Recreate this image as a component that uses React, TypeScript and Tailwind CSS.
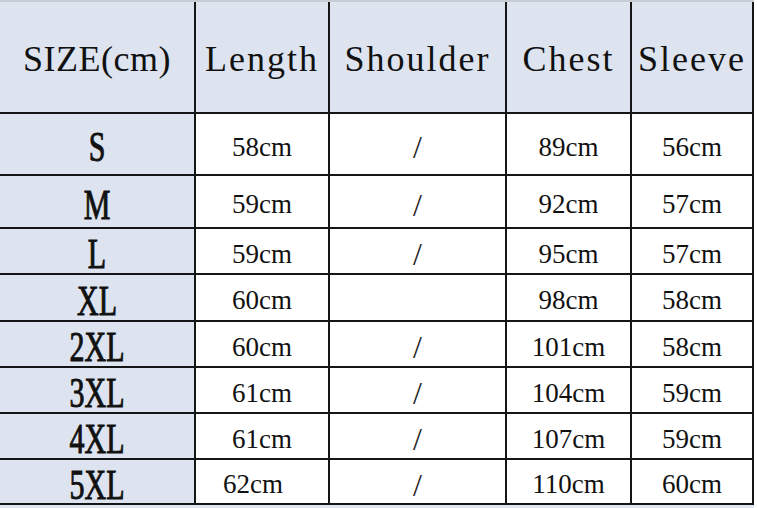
const headers = ["SIZE(cm)", "Length", "Shoulder", "Chest", "Sleeve"];

const rows = [
  { size: "S", length: "58cm", shoulder: "/", chest: "89cm", sleeve: "56cm", h: "h-[62px]" },
  { size: "M", length: "59cm", shoulder: "/", chest: "92cm", sleeve: "57cm", h: "h-[53px]" },
  { size: "L", length: "59cm", shoulder: "/", chest: "95cm", sleeve: "57cm", h: "h-[46px]" },
  { size: "XL", length: "60cm", shoulder: "", chest: "98cm", sleeve: "58cm", h: "h-[47px]" },
  { size: "2XL", length: "60cm", shoulder: "/", chest: "101cm", sleeve: "58cm", h: "h-[46px]" },
  { size: "3XL", length: "61cm", shoulder: "/", chest: "104cm", sleeve: "59cm", h: "h-[46px]" },
  { size: "4XL", length: "61cm", shoulder: "/", chest: "107cm", sleeve: "59cm", h: "h-[46px]" },
  { size: "5XL", length: "62cm", shoulder: "/", chest: "110cm", sleeve: "60cm", h: "h-[45px]" },
];

const widths = ["w-[196px]", "w-[134px]", "w-[177px]", "w-[125px]", "w-[122px]"];

const serif = { fontFamily: '"Liberation Serif", "Times New Roman", serif' };

export default function App() {
  return (
    <div className="w-[757px] h-[508px] bg-white overflow-hidden flex flex-col" style={serif}>
      <div className="h-[2px] w-[754px] bg-[#c6cbd4] shrink-0" />
      {/* header */}
      <div className="flex h-[112px] shrink-0">
        {headers.map((t, i) => (
          <div
            key={t}
            className={`${widths[i]} h-full bg-[#dde4ef] border-r-2 border-b-2 border-[#151515] flex items-center justify-center pt-[4px]`}
          >
            <span className={`text-[36px] leading-none text-[#111] inline-block ${i === 0 ? "tracking-[0.5px]" : "tracking-[2px]"}`}>{t}</span>
          </div>
        ))}
      </div>
      {rows.map((r) => (
        <div key={r.size} className={`flex ${r.h} shrink-0`}>
          <div className={`${widths[0]} h-full bg-[#dde4ef] border-r-2 border-b-2 border-[#151515] flex items-center justify-center pt-[6px]`}>
            <span className="text-[30px] leading-[30px] text-[#111] scale-y-[1.4] inline-block [-webkit-text-stroke:0.7px_#111]">{r.size}</span>
          </div>
          <div className={`${widths[1]} h-full bg-white border-r-2 border-b-2 border-[#151515] flex items-center justify-center pt-[6px] ${r.size === "5XL" ? "pr-[18px]" : ""}`}>
            <span className="text-[27px] leading-none text-[#111] inline-block">{r.length}</span>
          </div>
          <div className={`${widths[2]} h-full bg-white border-r-2 border-b-2 border-[#151515] flex items-center justify-center pt-[6px]`}>
            <span className="text-[32px] leading-none text-[#222] inline-block">{r.shoulder}</span>
          </div>
          <div className={`${widths[3]} h-full bg-white border-r-2 border-b-2 border-[#151515] flex items-center justify-center pt-[6px]`}>
            <span className="text-[27px] leading-none text-[#111] inline-block">{r.chest}</span>
          </div>
          <div className={`${widths[4]} h-full bg-white border-r-2 border-b-2 border-[#151515] flex items-center justify-center pt-[6px]`}>
            <span className="text-[27px] leading-none text-[#111] inline-block">{r.sleeve}</span>
          </div>
        </div>
      ))}
      <div className="flex-1 w-[754px] bg-[#dfe6f0]" />
    </div>
  );
}
